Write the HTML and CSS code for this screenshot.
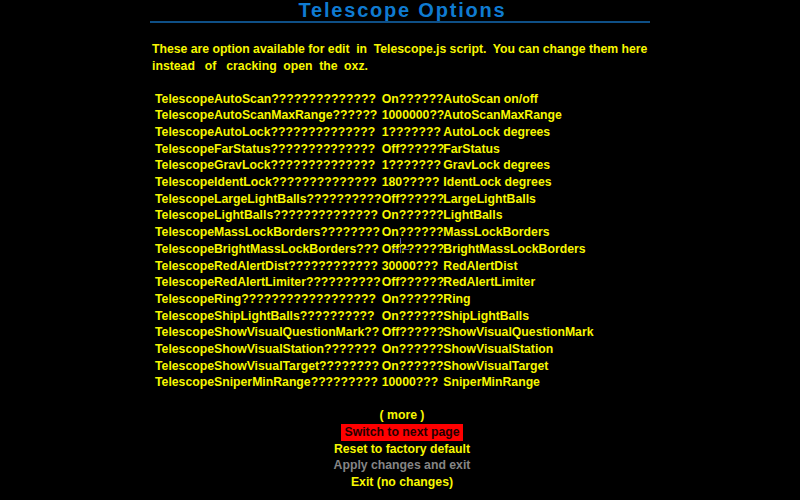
FILE: index.html
```html
<!DOCTYPE html>
<html>
<head>
<meta charset="utf-8">
<link rel="stylesheet" href="styles.css">
</head>
<body>
<div class="screen">
  <header class="title-bar"><h1 class="title">Telescope Options</h1></header>
  <p class="intro">These are option available for edit  in  Telescope.js script.  You can change them here
instead   of   cracking  open  the  oxz.</p>
  <div class="options">
    <div class="opt"><span class="name">TelescopeAutoScan??????????????</span><span class="val">On??????</span><span class="desc">AutoScan on/off</span></div>
    <div class="opt"><span class="name">TelescopeAutoScanMaxRange??????</span><span class="val">1000000??</span><span class="desc">AutoScanMaxRange</span></div>
    <div class="opt"><span class="name">TelescopeAutoLock??????????????</span><span class="val">1???????</span><span class="desc">AutoLock degrees</span></div>
    <div class="opt"><span class="name">TelescopeFarStatus??????????????</span><span class="val">Off??????</span><span class="desc">FarStatus</span></div>
    <div class="opt"><span class="name">TelescopeGravLock??????????????</span><span class="val">1???????</span><span class="desc">GravLock degrees</span></div>
    <div class="opt"><span class="name">TelescopeIdentLock??????????????</span><span class="val">180?????</span><span class="desc">IdentLock degrees</span></div>
    <div class="opt"><span class="name">TelescopeLargeLightBalls??????????</span><span class="val">Off??????</span><span class="desc">LargeLightBalls</span></div>
    <div class="opt"><span class="name">TelescopeLightBalls??????????????</span><span class="val">On??????</span><span class="desc">LightBalls</span></div>
    <div class="opt"><span class="name">TelescopeMassLockBorders????????</span><span class="val">On??????</span><span class="desc">MassLockBorders</span></div>
    <div class="opt"><span class="name">TelescopeBrightMassLockBorders???</span><span class="val">Off??????</span><span class="desc">BrightMassLockBorders</span></div>
    <div class="opt"><span class="name">TelescopeRedAlertDist????????????</span><span class="val">30000???</span><span class="desc">RedAlertDist</span></div>
    <div class="opt"><span class="name">TelescopeRedAlertLimiter??????????</span><span class="val">Off??????</span><span class="desc">RedAlertLimiter</span></div>
    <div class="opt"><span class="name">TelescopeRing??????????????????</span><span class="val">On??????</span><span class="desc">Ring</span></div>
    <div class="opt"><span class="name">TelescopeShipLightBalls??????????</span><span class="val">On??????</span><span class="desc">ShipLightBalls</span></div>
    <div class="opt"><span class="name">TelescopeShowVisualQuestionMark??</span><span class="val">Off??????</span><span class="desc">ShowVisualQuestionMark</span></div>
    <div class="opt"><span class="name">TelescopeShowVisualStation???????</span><span class="val">On??????</span><span class="desc">ShowVisualStation</span></div>
    <div class="opt"><span class="name">TelescopeShowVisualTarget????????</span><span class="val">On??????</span><span class="desc">ShowVisualTarget</span></div>
    <div class="opt"><span class="name">TelescopeSniperMinRange?????????</span><span class="val">10000???</span><span class="desc">SniperMinRange</span></div>
  </div>
  <ul class="menu">
    <li class="menu-item">( more )</li>
    <li class="menu-item"><span class="selected">Switch to next page</span></li>
    <li class="menu-item">Reset to factory default</li>
    <li class="menu-item disabled">Apply changes and exit</li>
    <li class="menu-item">Exit (no changes)</li>
  </ul>
  <svg class="cursor" width="22" height="18" viewBox="0 0 22 18">
    <path d="M10.5 0 V6 M10.5 9 V15 M2 11.5 H8 M13 11.5 H19" stroke="#5c5c9c" stroke-width="1" fill="none"/>
  </svg>
</div>
</body>
</html>
```
FILE: styles.css
```css
html, body {
  margin: 0;
  padding: 0;
  background: #000;
}
body {
  width: 800px;
  height: 500px;
  overflow: hidden;
  font-family: "Liberation Sans", Arial, sans-serif;
  font-weight: bold;
  font-size: 12.25px;
  color: #f8f800;
}
.screen {
  position: relative;
  width: 800px;
  height: 500px;
}
.title-bar {
  width: 500px;
  margin: 0 auto;
  border-bottom: 2px solid #0e4f86;
  text-align: center;
}
.title {
  margin: 0;
  padding-left: 5px;
  font-size: 20px;
  line-height: 21px;
  letter-spacing: 1.8px;
  color: #0f7bd1;
  font-weight: bold;
}
.intro {
  margin: 17.5px 0 0 152px;
  white-space: pre;
  line-height: 17px;
  word-spacing: -0.1px;
}
.options {
  margin-top: 16px;
  padding-left: 155px;
  line-height: 16.7px;
}
.opt {
  display: grid;
  grid-template-columns: 226.7px 61.6px auto;
  white-space: pre;
}
.menu {
  list-style: none;
  margin: 16px 0 0;
  padding: 0 0 0 4px;
  text-align: center;
  line-height: 16.7px;
}
.selected {
  display: inline-block;
  background: #f00;
  color: #200;
  padding: 0 3px;
}
.disabled {
  color: #858585;
}
.cursor {
  position: absolute;
  left: 390px;
  top: 238px;
}
```
